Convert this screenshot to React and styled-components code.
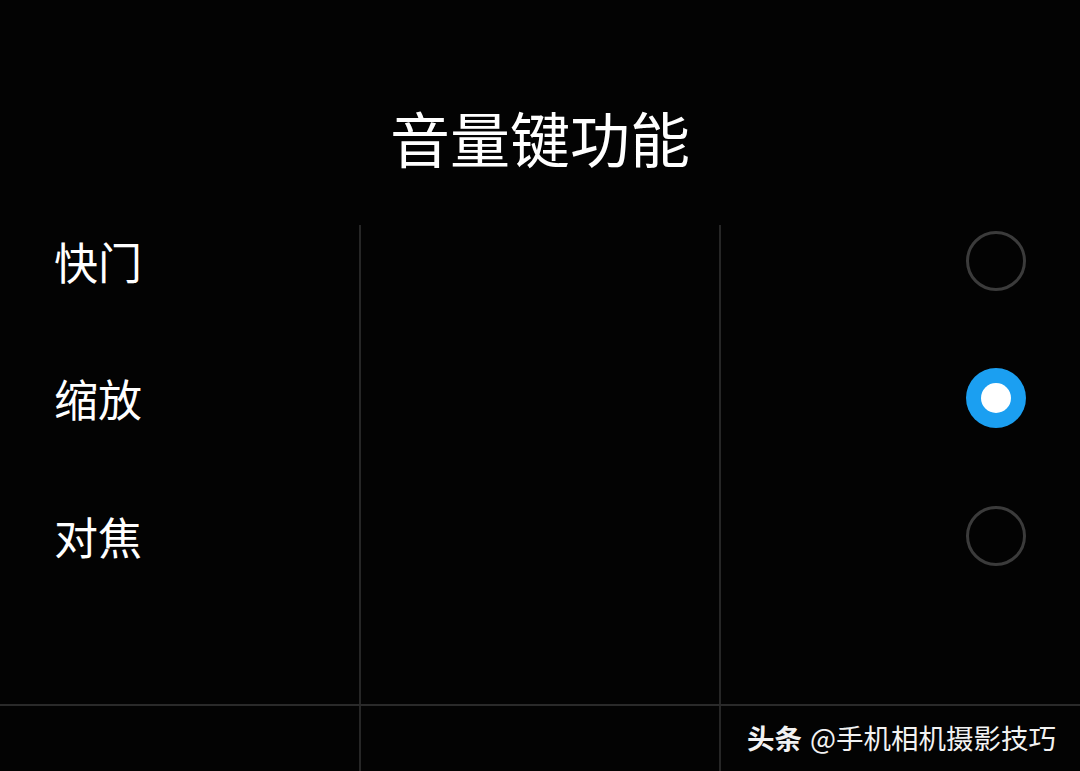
import React from "react";
import styled, { createGlobalStyle } from "styled-components";

const Global = createGlobalStyle`
  html, body { margin: 0; padding: 0; background: #000; }
  body { font-family: "Noto Sans CJK SC", "Noto Sans", sans-serif; color: #fff; }
`;

const Screen = styled.div`
  position: relative;
  width: 1080px;
  height: 771px;
  background: #030303;
  overflow: hidden;
  display: flex;
  flex-direction: column;
`;

const Title = styled.h1`
  margin: 0;
  height: 192px;
  padding-top: 101px;
  box-sizing: border-box;
  text-align: center;
  font-size: 60px;
  font-weight: 400;
  line-height: 72px;
  color: #fff;
`;

const List = styled.div`
  display: flex;
  flex-direction: column;
`;

const Row = styled.div`
  height: 137.5px;
  display: flex;
  align-items: center;
  justify-content: space-between;
  padding: 0 54px 0 54px;
`;

const Label = styled.span`
  font-size: 44px;
  line-height: 1;
  color: #fff;
`;

const Radio = styled.span`
  width: 60px;
  height: 60px;
  box-sizing: border-box;
  border-radius: 50%;
  display: flex;
  align-items: center;
  justify-content: center;
  border: ${(p) => (p.$checked ? "none" : "3px solid #3b3b3b")};
  background: ${(p) => (p.$checked ? "#1b9ff1" : "transparent")};
  &::after {
    content: "";
    display: ${(p) => (p.$checked ? "block" : "none")};
    width: 30px;
    height: 30px;
    border-radius: 50%;
    background: #fff;
  }
`;

const Footer = styled.div`
  margin-top: auto;
  height: 68px;
  display: flex;
  align-items: center;
  justify-content: flex-end;
  padding-right: 24px;
  font-size: 27.5px;
  color: #f2f2f2;
`;

const Brand = styled.b`
  font-weight: 700;
  margin-right: 8px;
`;

const GridV = styled.div`
  position: absolute;
  top: 225px;
  bottom: 0;
  left: ${(p) => p.$x}px;
  width: 2px;
  background: #262626;
`;

const GridH = styled.div`
  position: absolute;
  left: 0;
  right: 0;
  top: ${(p) => p.$y}px;
  height: 2px;
  background: #2a2a2a;
`;

const options = [
  { label: "快门", checked: false },
  { label: "缩放", checked: true },
  { label: "对焦", checked: false },
];

export default function App() {
  return (
    <>
      <Global />
      <Screen>
        <Title>音量键功能</Title>
        <List>
          {options.map((o) => (
            <Row key={o.label}>
              <Label>{o.label}</Label>
              <Radio $checked={o.checked} />
            </Row>
          ))}
        </List>
        <Footer>
          <Brand>头条</Brand>@手机相机摄影技巧
        </Footer>
        <GridV $x={359} />
        <GridV $x={719} />
        <GridH $y={704} />
      </Screen>
    </>
  );
}
